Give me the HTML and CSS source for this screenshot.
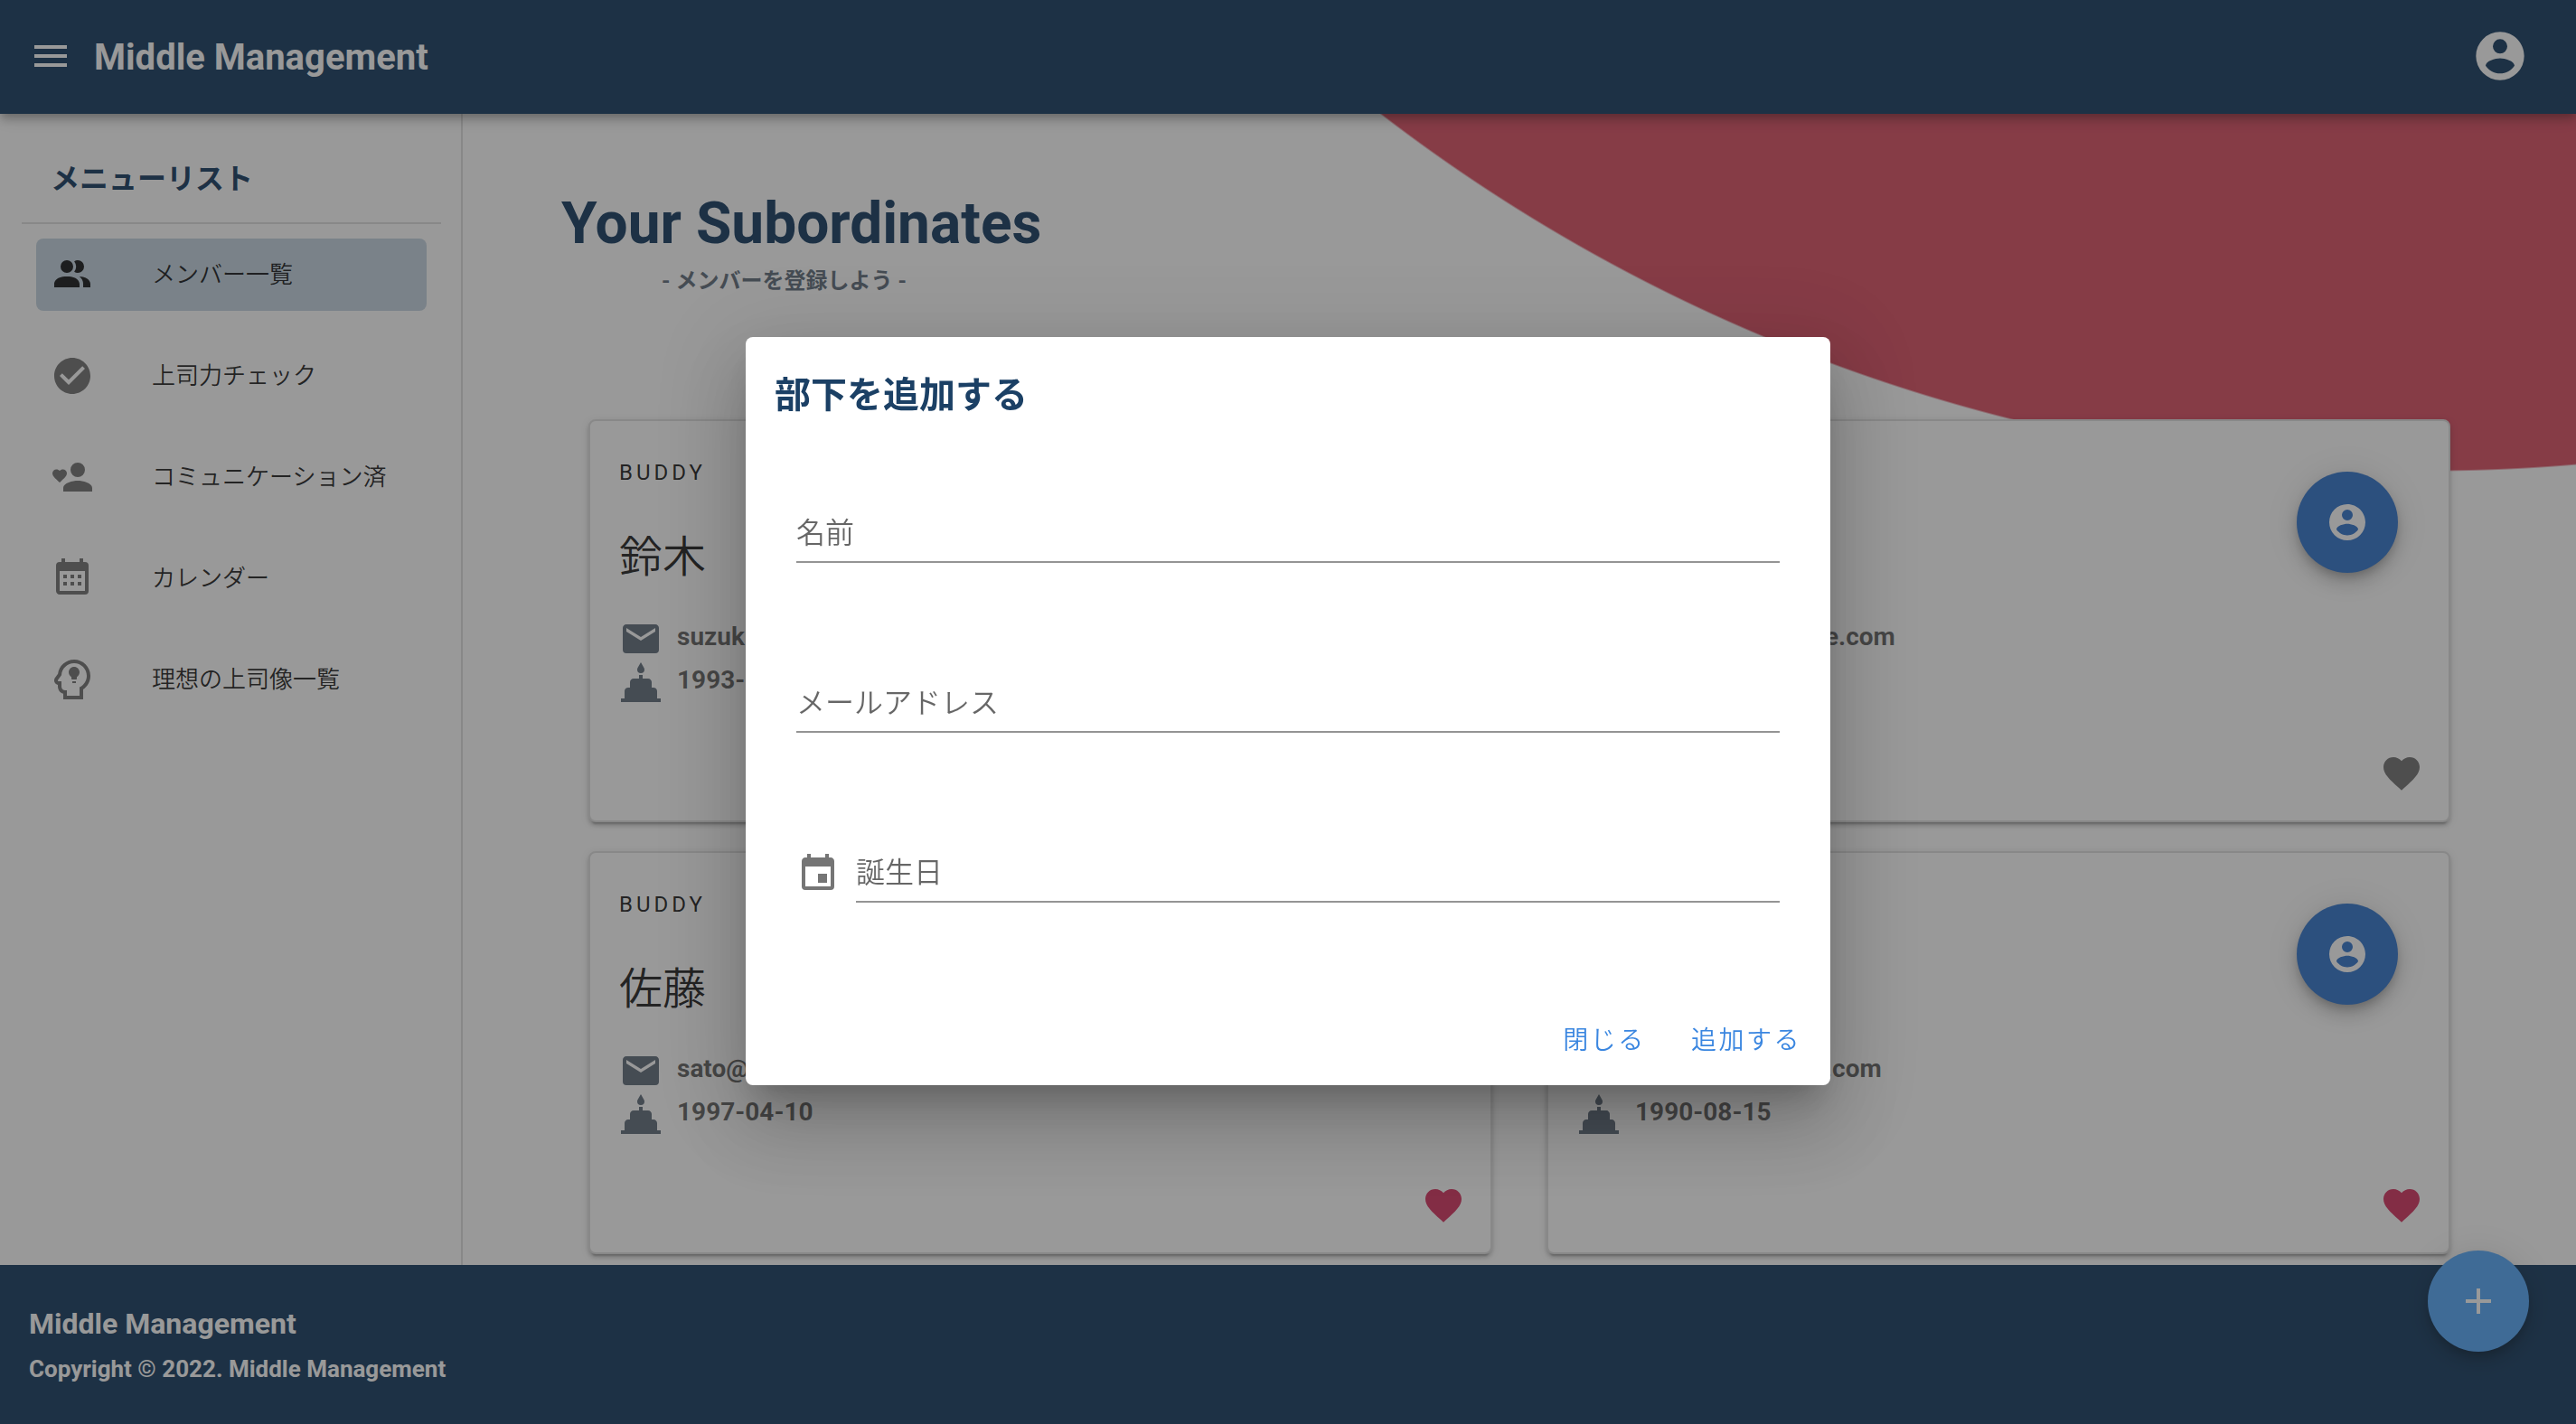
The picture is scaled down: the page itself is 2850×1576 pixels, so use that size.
FILE: index.html
```html
<!DOCTYPE html>
<html lang="ja">
<head>
<meta charset="utf-8">
<meta name="viewport" content="width=device-width, initial-scale=1">
<title>Middle Management</title>
<link rel="stylesheet" href="styles.css">
</head>
<body>
<svg class="sprite" aria-hidden="true">
  <symbol id="i-menu" viewBox="0 0 24 24"><path d="M3,6H21V8H3V6M3,11H21V13H3V11M3,16H21V18H3V16Z"/></symbol>
  <symbol id="i-account-circle" viewBox="0 0 24 24"><path d="M12,19.2C9.5,19.2 7.29,17.92 6,16C6.03,14 10,12.9 12,12.9C14,12.9 17.97,14 18,16C16.71,17.92 14.5,19.2 12,19.2M12,5A3,3 0 0,1 15,8A3,3 0 0,1 12,11A3,3 0 0,1 9,8A3,3 0 0,1 12,5M12,2A10,10 0 0,0 2,12A10,10 0 0,0 12,22A10,10 0 0,0 22,12C22,6.47 17.5,2 12,2Z"/></symbol>
  <symbol id="i-members" viewBox="0 0 24 24"><path d="M16 17V19H2V17S2 13 9 13 16 17 16 17M12.5 7.5A3.5 3.5 0 1 0 9 11A3.5 3.5 0 0 0 12.5 7.5M15.94 13A5.32 5.32 0 0 1 18 17V19H22V17S22 13.37 15.94 13M15 4A3.39 3.39 0 0 0 13.07 4.59A5 5 0 0 1 13.07 10.41A3.39 3.39 0 0 0 15 11A3.5 3.5 0 0 0 15 4Z"/></symbol>
  <symbol id="i-check" viewBox="0 0 24 24"><path d="M12 2C6.5 2 2 6.5 2 12S6.5 22 12 22 22 17.5 22 12 17.5 2 12 2M10 17L5 12L6.41 10.59L10 14.17L17.59 6.58L19 8L10 17Z"/></symbol>
  <symbol id="i-account-heart" viewBox="0 0 24 24"><path d="M15,14C12.3,14 7,15.3 7,18V20H23V18C23,15.3 17.7,14 15,14M15,12A4,4 0 0,0 19,8A4,4 0 0,0 15,4A4,4 0 0,0 11,8A4,4 0 0,0 15,12M5,15L4.4,14.5C2.4,12.6 1,11.4 1,9.9C1,8.7 2,7.7 3.2,7.7C3.9,7.7 4.6,8 5,8.5C5.4,8 6.1,7.7 6.8,7.7C8,7.7 9,8.6 9,9.9C9,11.4 7.6,12.6 5.6,14.5L5,15Z"/></symbol>
  <symbol id="i-calendar-month" viewBox="0 0 24 24"><path d="M9,10V12H7V10H9M13,10V12H11V10H13M17,10V12H15V10H17M19,3A2,2 0 0,1 21,5V19A2,2 0 0,1 19,21H5C3.89,21 3,20.1 3,19V5A2,2 0 0,1 5,3H6V1H8V3H16V1H18V3H19M19,19V8H5V19H19M9,14V16H7V14H9M13,14V16H11V14H13M17,14V16H15V14H17Z"/></symbol>
  <symbol id="i-idea" viewBox="0 0 24 24"><path d="M13 3C16.88 3 20 6.14 20 10C20 12.8 18.37 15.19 16 16.31V21H9V18H8C6.89 18 6 17.11 6 16V13H4.5C4.08 13 3.84 12.5 4.08 12.19L6 9.66C6.19 5.95 9.23 3 13 3M13 1C8.41 1 4.61 4.42 4.06 8.9L2.5 11L2.47 11L2.45 11.03C1.9 11.79 1.83 12.79 2.26 13.62C2.62 14.31 3.26 14.79 4 14.94V16C4 17.85 5.28 19.42 7 19.87V23H18V17.5C20.5 15.83 22 13.06 22 10C22 5.03 17.96 1 13 1M13 5C11.34 5 10 6.34 10 8C10 9.11 10.61 10.06 11.5 10.58V11.5C11.5 11.78 11.72 12 12 12H14C14.28 12 14.5 11.78 14.5 11.5V10.58C15.39 10.06 16 9.11 16 8C16 6.34 14.66 5 13 5M12 13V14H14V13H12Z"/></symbol>
  <symbol id="i-email" viewBox="0 0 24 24"><path d="M20,8L12,13L4,8V6L12,11L20,6M20,4H4C2.89,4 2,4.89 2,6V18A2,2 0 0,0 4,20H20A2,2 0 0,0 22,18V6C22,4.89 21.1,4 20,4Z"/></symbol>
  <symbol id="i-cake" viewBox="0 0 24 24"><path d="M21 21V17C21 15.89 20.1 15 19 15H18V12C18 10.89 17.1 10 16 10H13V8H11V10H8C6.89 10 6 10.89 6 12V15H5C3.89 15 3 15.89 3 17V21H1V23H23V21M12 7A2 2 0 0 0 14 5C14 4.62 13.9 4.27 13.71 3.97L12 1L10.28 3.97C10.1 4.27 10 4.62 10 5A2 2 0 0 0 12 7Z"/></symbol>
  <symbol id="i-heart" viewBox="0 0 24 24"><path d="M12,21.35L10.55,20.03C5.4,15.36 2,12.27 2,8.5C2,5.41 4.42,3 7.5,3C9.24,3 10.91,3.81 12,5.08C13.09,3.81 14.76,3 16.5,3C19.58,3 22,5.41 22,8.5C22,12.27 18.6,15.36 13.45,20.03L12,21.35Z"/></symbol>
  <symbol id="i-plus" viewBox="0 0 24 24"><path d="M19,13H13V19H11V13H5V11H11V5H13V11H19V13Z"/></symbol>
  <symbol id="i-calendar" viewBox="0 0 24 24"><path d="M19,19H5V8H19M16,1V3H8V1H6V3H5C3.89,3 3,3.89 3,5V19A2,2 0 0,0 5,21H19A2,2 0 0,0 21,19V5C21,3.89 20.1,3 19,3H18V1M17,12H12V17H17V12Z"/></symbol>
</svg>

<header class="app-bar">
  <button class="icon-btn" type="button" aria-label="Menu"><svg class="icon"><use href="#i-menu"/></svg></button>
  <div class="app-title">Middle Management</div>
  <button class="icon-btn account" type="button" aria-label="Account"><svg class="icon icon-large"><use href="#i-account-circle"/></svg></button>
</header>

<div class="layout">
  <aside class="sidebar">
    <h2 class="sidebar-title">メニューリスト</h2>
    <nav class="menu">
      <a class="menu-item active" href="#members"><svg class="icon"><use href="#i-members"/></svg>メンバー一覧</a>
      <a class="menu-item" href="#check"><svg class="icon"><use href="#i-check"/></svg>上司力チェック</a>
      <a class="menu-item" href="#communication"><svg class="icon"><use href="#i-account-heart"/></svg>コミュニケーション済</a>
      <a class="menu-item" href="#calendar"><svg class="icon"><use href="#i-calendar-month"/></svg>カレンダー</a>
      <a class="menu-item" href="#ideal"><svg class="icon"><use href="#i-idea"/></svg>理想の上司像一覧</a>
    </nav>
  </aside>

  <main class="content">
    <div class="page-head">
      <h1>Your Subordinates</h1>
      <p>- メンバーを登録しよう -</p>
    </div>
    <div class="cards">
      <article class="card">
        <div class="card-text">
          <div class="overline">BUDDY</div>
          <h3 class="name">鈴木</h3>
          <div class="detail"><svg class="icon"><use href="#i-email"/></svg><span>suzuki@example.com</span></div>
          <div class="detail"><svg class="icon"><use href="#i-cake"/></svg><span>1993-05-20</span></div>
        </div>
        <div class="card-actions">
          <button class="fab fab-profile" type="button" aria-label="プロフィール"><svg class="icon"><use href="#i-account-circle"/></svg></button>
          <button class="icon-btn heart" type="button" aria-label="コミュニケーション"><svg class="icon"><use href="#i-heart"/></svg></button>
        </div>
      </article>
      <article class="card">
        <div class="card-text">
          <div class="overline">BUDDY</div>
          <h3 class="name">大和</h3>
          <div class="detail"><svg class="icon"><use href="#i-email"/></svg><span>yamato@example.com</span></div>
          <div class="detail"><svg class="icon"><use href="#i-cake"/></svg><span>1995-11-02</span></div>
        </div>
        <div class="card-actions">
          <button class="fab fab-profile" type="button" aria-label="プロフィール"><svg class="icon"><use href="#i-account-circle"/></svg></button>
          <button class="icon-btn heart" type="button" aria-label="コミュニケーション"><svg class="icon"><use href="#i-heart"/></svg></button>
        </div>
      </article>
      <article class="card">
        <div class="card-text">
          <div class="overline">BUDDY</div>
          <h3 class="name">佐藤</h3>
          <div class="detail"><svg class="icon"><use href="#i-email"/></svg><span>sato@example.com</span></div>
          <div class="detail"><svg class="icon"><use href="#i-cake"/></svg><span>1997-04-10</span></div>
        </div>
        <div class="card-actions">
          <button class="fab fab-profile" type="button" aria-label="プロフィール"><svg class="icon"><use href="#i-account-circle"/></svg></button>
          <button class="icon-btn heart done" type="button" aria-label="コミュニケーション"><svg class="icon"><use href="#i-heart"/></svg></button>
        </div>
      </article>
      <article class="card">
        <div class="card-text">
          <div class="overline">BUDDY</div>
          <h3 class="name">本田</h3>
          <div class="detail"><svg class="icon"><use href="#i-email"/></svg><span>honda@example.com</span></div>
          <div class="detail"><svg class="icon"><use href="#i-cake"/></svg><span>1990-08-15</span></div>
        </div>
        <div class="card-actions">
          <button class="fab fab-profile" type="button" aria-label="プロフィール"><svg class="icon"><use href="#i-account-circle"/></svg></button>
          <button class="icon-btn heart done" type="button" aria-label="コミュニケーション"><svg class="icon"><use href="#i-heart"/></svg></button>
        </div>
      </article>
    </div>
  </main>
</div>

<footer class="footer">
  <div class="footer-title">Middle Management</div>
  <div class="footer-copy">Copyright © 2022. Middle Management</div>
</footer>

<button class="fab fab-add" type="button" aria-label="部下を追加する"><svg class="icon"><use href="#i-plus"/></svg></button>

<div class="overlay">
  <form class="dialog" role="dialog" aria-modal="true" aria-labelledby="dialog-title">
    <h2 class="dialog-title" id="dialog-title">部下を追加する</h2>
    <div class="fields">
      <div class="field">
        <label for="name">名前</label>
        <input id="name" type="text">
      </div>
      <div class="field">
        <label for="email">メールアドレス</label>
        <input id="email" type="email">
      </div>
      <div class="field-row">
        <svg class="icon"><use href="#i-calendar"/></svg>
        <div class="field">
          <label for="birthday">誕生日</label>
          <input id="birthday" type="text" readonly>
        </div>
      </div>
    </div>
    <div class="dialog-actions">
      <button class="text-btn" type="button">閉じる</button>
      <button class="text-btn" type="button">追加する</button>
    </div>
  </form>
</div>
</body>
</html>
```

FILE: styles.css
```css
:root {
  --navy: #1b4065;
  --pink: #dc5367;
  --text: rgba(0, 0, 0, 0.87);
  --muted: rgba(0, 0, 0, 0.6);
  --line: rgba(0, 0, 0, 0.12);
}

*, *::before, *::after { box-sizing: border-box; }

body {
  margin: 0;
  min-height: 100vh;
  display: flex;
  flex-direction: column;
  background: #fff;
  color: var(--text);
  font-family: Roboto, "Noto Sans CJK JP", sans-serif;
  font-size: 28px;
}

h1, h2, h3, p { margin: 0; }
button, input { font: inherit; color: inherit; }
button { border: 0; background: none; padding: 0; cursor: pointer; }

.sprite { display: none; }
.icon { width: 48px; height: 48px; flex: none; display: block; fill: currentColor; }
.icon-large { width: 64px; height: 64px; }

/* Top bar */
.app-bar {
  position: relative;
  z-index: 2;
  display: flex;
  align-items: center;
  gap: 24px;
  height: 126px;
  padding: 0 52px 2px 32px;
  background: var(--navy);
  color: #fff;
  box-shadow: 0 4px 8px -2px rgba(0, 0, 0, 0.2), 0 8px 10px rgba(0, 0, 0, 0.14), 0 2px 20px rgba(0, 0, 0, 0.12);
}
.app-title { padding-top: 4px; font-size: 40px; font-weight: 700; line-height: 64px; }
.account { margin-left: auto; }

.layout { flex: 1; display: flex; }

/* Side menu */
.sidebar {
  flex: none;
  width: 512px;
  padding: 40px 22px 0 24px;
  border-right: 2px solid var(--line);
}
.sidebar-title {
  padding: 0 32px 16px;
  border-bottom: 2px solid var(--line);
  color: var(--navy);
  font-size: 32px;
  line-height: 64px;
}
.menu { display: flex; flex-direction: column; gap: 32px; padding: 16px; }
.menu-item {
  display: flex;
  align-items: center;
  gap: 64px;
  height: 80px;
  padding: 0 16px;
  border-radius: 8px;
  color: var(--text);
  font-size: 26px;
  font-weight: 350;
  line-height: 32px;
  text-decoration: none;
  white-space: nowrap;
}
.menu-item .icon { fill: #757575; }
.menu-item.active { background: #c6d5e1; }
.menu-item.active .icon { fill: #1a1c1e; }

/* Main area */
.content {
  flex: 1;
  min-width: 0;
  padding-bottom: 12px;
  background: radial-gradient(circle at calc(100% - 162px) -1507px, var(--pink) 1901px, transparent 1903px);
}
.page-head { padding: 74px 109px 0; }
.page-head h1 { color: var(--navy); font-size: 64px; line-height: 96px; }
.page-head p {
  padding-left: 111px;
  color: #64717f;
  font-size: 24px;
  font-weight: 700;
  line-height: 30px;
}
.cards {
  display: grid;
  grid-template-columns: 1fr 1fr;
  gap: 32px 60px;
  padding: 138px 139px 0;
}
.card {
  display: flex;
  justify-content: space-between;
  min-height: 446px;
  background: #fff;
  border: 2px solid #e0e0e0;
  border-radius: 8px;
  box-shadow: 0 6px 2px -4px rgba(0, 0, 0, 0.2), 0 4px 4px rgba(0, 0, 0, 0.14), 0 2px 10px rgba(0, 0, 0, 0.12);
}
.card-text { padding: 25px 0 24px 32px; }
.overline { font-size: 24px; line-height: 64px; letter-spacing: 4px; }
.name { margin: 30px 0 34px; font-size: 48px; font-weight: 350; line-height: 64px; }
.detail {
  display: flex;
  align-items: center;
  gap: 16px;
  height: 48px;
  color: var(--muted);
  font-weight: 700;
  line-height: 44px;
}
.detail span { padding-bottom: 4px; }
.detail .icon { fill: #64717f; }
.card-actions {
  display: flex;
  flex-direction: column;
  align-items: flex-end;
  justify-content: space-between;
  padding: 56px 28px 28px 0;
}
.heart { color: #757575; }
.heart.done { color: #d63965; }

.fab {
  display: grid;
  place-items: center;
  width: 112px;
  height: 112px;
  border-radius: 50%;
  color: #fff;
  box-shadow: 0 6px 10px -2px rgba(0, 0, 0, 0.2), 0 12px 20px rgba(0, 0, 0, 0.14), 0 2px 36px rgba(0, 0, 0, 0.12);
}
.fab-profile { margin-right: 28px; background: #3778cd; }
.fab-add { position: fixed; right: 52px; bottom: 80px; z-index: 3; background: #5aaafa; }

/* Footer */
.footer {
  position: relative;
  z-index: 1;
  min-height: 176px;
  padding: 40px 32px;
  background: var(--navy);
  color: #fff;
  font-weight: 700;
  line-height: 50px;
}
.footer-title { font-size: 32px; }
.footer-copy { font-size: 26px; }

/* Dialog */
.overlay {
  position: fixed;
  inset: 0;
  z-index: 10;
  display: flex;
  align-items: center;
  justify-content: center;
  padding-bottom: 2px;
  background: rgba(33, 33, 33, 0.46);
}
.dialog {
  width: 1200px;
  max-width: 90%;
  background: #fff;
  border-radius: 8px;
  box-shadow: 0 22px 30px -14px rgba(0, 0, 0, 0.2), 0 48px 76px 6px rgba(0, 0, 0, 0.14), 0 18px 92px 16px rgba(0, 0, 0, 0.12);
}
.dialog-title { padding: 33px 32px 0; color: var(--navy); font-size: 40px; line-height: 64px; }
.fields {
  display: flex;
  flex-direction: column;
  gap: 124px;
  padding: 89px 56px 98px;
}
.field-row { display: flex; align-items: center; gap: 18px; }
.field { flex: 1; display: grid; color: var(--muted); }
.field label, .field input { grid-area: 1 / 1; font-size: 32px; font-weight: 350; line-height: 62px; }
.field label { pointer-events: none; }
.field input {
  width: 100%;
  height: 64px;
  padding: 0;
  border: 0;
  border-bottom: 2px solid #949494;
  background: transparent;
  outline: 0;
}
.field-row .icon { fill: #757575; }
.dialog-actions { display: flex; justify-content: flex-end; gap: 16px; padding: 16px; }
.text-btn {
  min-width: 128px;
  height: 72px;
  padding: 0 16px;
  color: #3a86e0;
  font-size: 28px;
  font-weight: 350;
  letter-spacing: 0.09em;
}
```
